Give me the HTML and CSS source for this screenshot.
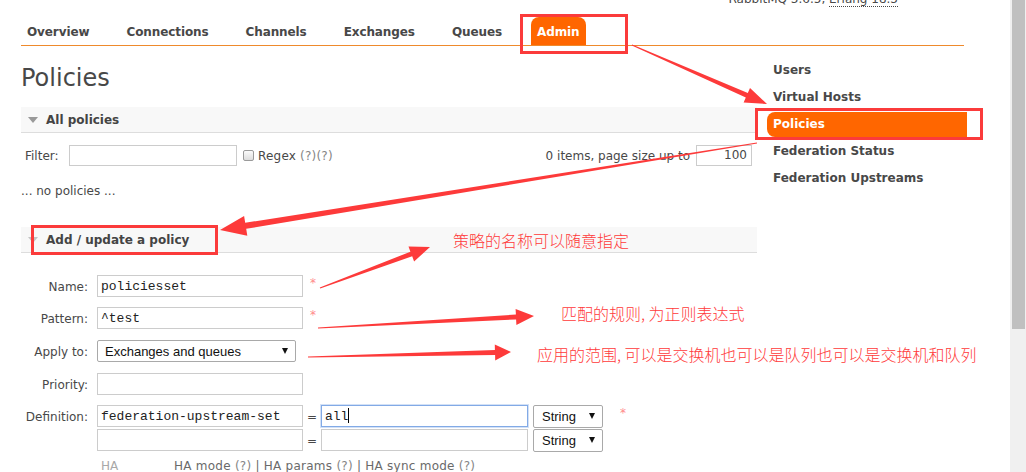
FILE: index.html
```html
<!DOCTYPE html>
<html lang="en">
<head>
<meta charset="utf-8">
<title>RabbitMQ Management - Policies</title>
<link rel="stylesheet" href="styles.css">
</head>
<body>
<div class="viewport">
  <div class="page">
    <div class="masthead"><span class="version">RabbitMQ 3.6.5, <abbr class="erlang">Erlang 18.3</abbr></span></div>
    <ul class="menu">
      <li><a>Overview</a></li>
      <li><a>Connections</a></li>
      <li><a>Channels</a></li>
      <li><a>Exchanges</a></li>
      <li><a>Queues</a></li>
      <li class="active"><a>Admin</a></li>
    </ul>
    <div class="content">
      <div class="main">
        <h1>Policies</h1>
        <div class="section">
          <h2 class="section-head"><span class="tri"></span>All policies</h2>
          <div class="filter-row">
            <label class="filter-label">Filter:</label>
            <div class="filter-input"></div>
            <span class="checkbox"></span>
            <span class="regex">Regex <span class="help">(?)(?)</span></span>
            <span class="items">0 items, page size up to</span>
            <div class="page-size">100</div>
          </div>
          <p class="empty">... no policies ...</p>
        </div>
        <div class="section add">
          <h2 class="section-head"><span class="tri light"></span>Add / update a policy</h2>
          <div class="form">
            <div class="frow mb10">
              <label class="flabel">Name:</label>
              <div class="input">policiesset</div>
              <span class="req">*</span>
            </div>
            <div class="frow mb11">
              <label class="flabel">Pattern:</label>
              <div class="input">^test</div>
              <span class="req">*</span>
            </div>
            <div class="frow mb11">
              <label class="flabel">Apply to:</label>
              <div class="select apply"><span>Exchanges and queues</span><span class="caret"></span></div>
            </div>
            <div class="frow mb10">
              <label class="flabel">Priority:</label>
              <div class="input"></div>
            </div>
            <div class="frow">
              <label class="flabel">Definition:</label>
              <div class="input">federation-upstream-set</div>
              <span class="eq">=</span>
              <div class="input value focus">all<span class="cursor"></span></div>
              <div class="select type"><span>String</span><span class="caret"></span></div>
              <span class="req wide">*</span>
            </div>
            <div class="frow second">
              <span class="flabel"></span>
              <div class="input"></div>
              <span class="eq">=</span>
              <div class="input value"></div>
              <div class="select type"><span>String</span><span class="caret"></span></div>
            </div>
            <div class="ha-row">
              <span class="ha-label">HA</span>
              <span class="ha-links">HA mode <span class="help">(?)</span> | HA params <span class="help">(?)</span> | HA sync mode <span class="help">(?)</span></span>
            </div>
          </div>
        </div>
      </div>
      <ul class="side">
        <li><a>Users</a></li>
        <li><a>Virtual Hosts</a></li>
        <li class="active"><a>Policies</a></li>
        <li><a>Federation Status</a></li>
        <li><a>Federation Upstreams</a></li>
      </ul>
    </div>
  </div>
  <div class="scrollbar"><div class="thumb"></div></div>

  <div class="annotations">
    <div class="box box-admin"></div>
    <div class="box box-policies"></div>
    <div class="box box-add"></div>
    <svg class="arrows" width="1026" height="472" viewBox="0 0 1026 472">
      <polygon points="631.8,45.5 745.8,97.5 743.6,102.5 767,104 750.0,87.9 747.8,92.9 632.2,44.5"/>
      <polygon points="756.9,142.5 245.2,222.8 244.1,216.0 220,230 247.3,235.7 246.2,228.8 757.1,143.5"/>
      <polygon points="320.2,288.5 412.2,256.3 414.1,261.5 430,247 408.5,246.5 410.4,251.7 319.8,287.5"/>
      <polygon points="318,328.5 516.1,319.5 516.4,325.0 534,316 515.6,309.0 515.9,314.5 318,327.5"/>
      <polygon points="308,357.5 495.1,354.9 495.2,360.4 511,352 494.8,344.4 494.9,349.9 308,356.5"/>
    </svg>
    <div class="note note-name">策略的名称可以随意指定</div>
    <div class="note note-pattern">匹配的规则, 为正则表达式</div>
    <div class="note note-apply">应用的范围, 可以是交换机也可以是队列也可以是交换机和队列</div>
  </div>
</div>
</body>
</html>
```

FILE: styles.css
```css
html, body {
  margin: 0;
  padding: 0;
  background: #fff;
}
body {
  font: 12px/14px "DejaVu Sans", Verdana, sans-serif;
  color: #484848;
  overflow: hidden;
}
.viewport {
  position: relative;
  display: flex;
  width: 1026px;
  height: 472px;
  overflow: hidden;
}
.page {
  flex: 1;
  padding-left: 21px;
}
.scrollbar {
  width: 16px;
  background: #f0f0f0;
}
.thumb {
  margin-left: 2px;
  width: 13px;
  height: 329px;
  background: #c0c0c0;
}

/* masthead */
.masthead {
  width: 877px;
  height: 14px;
  margin-top: -8px;
  text-align: right;
}
.erlang {
  text-decoration: none;
  border-bottom: 1px dotted #484848;
}

/* top menu */
.menu {
  display: flex;
  gap: 25px;
  list-style: none;
  margin: 11px 0 0;
  padding: 0;
  width: 943px;
  border-bottom: 1px solid #ef8a2c;
}
.menu li a {
  display: block;
  padding: 8px 6px 6px;
  font-weight: bold;
  letter-spacing: -0.1px;
  color: #484848;
}
.menu li.active {
  margin-left: -2px;
}
.menu li.active a {
  background: #f60;
  color: #fff;
  border-radius: 8px 8px 0 0;
}

/* content */
.content {
  display: flex;
}
.main {
  width: 736px;
}
h1 {
  margin: 18px 0 14px;
  font-size: 24px;
  line-height: 29px;
  font-weight: normal;
  color: #484848;
}
.section-head {
  display: flex;
  align-items: center;
  margin: 0;
  height: 25px;
  padding-left: 7px;
  background: #f8f8f8;
  border-bottom: 1px solid #dddddd;
  font-size: 12px;
  font-weight: bold;
  color: #444;
}
.tri {
  width: 0;
  height: 0;
  border-left: 5px solid transparent;
  border-right: 5px solid transparent;
  border-top: 6px solid #999;
  margin-right: 8px;
}
.tri.light {
  border-top-color: #c4c4c4;
}

/* filter */
.filter-row {
  display: flex;
  align-items: center;
  height: 21px;
  margin-top: 12px;
  padding: 0 5px 0 4px;
}
.filter-label {
  width: 44px;
}
.filter-input {
  width: 168px;
  height: 21px;
  box-sizing: border-box;
  border: 1px solid #cccccc;
}
.checkbox {
  width: 11px;
  height: 11px;
  box-sizing: border-box;
  margin: 0 4px 0 6px;
  border: 1px solid #9a9a9a;
  border-radius: 2px;
  background: linear-gradient(#fbfbfb, #dcdcdc);
}
.regex {
  letter-spacing: 0.2px;
}
.help {
  color: #858585;
}
.items {
  margin-left: auto;
  margin-right: 6px;
}
.page-size {
  width: 56px;
  height: 21px;
  box-sizing: border-box;
  border: 1px solid #cccccc;
  text-align: right;
  padding-right: 4px;
  line-height: 19px;
}
.empty {
  margin: 18px 0 29px;
}

/* form */
.form {
  padding-top: 22px;
}
.frow {
  display: flex;
  align-items: center;
  height: 22px;
}
.mb10 { margin-bottom: 10px; }
.mb11 { margin-bottom: 11px; }
.frow.second {
  margin-top: 2px;
}
.flabel {
  width: 67px;
  margin-right: 9px;
  padding-top: 1px;
  text-align: right;
}
.input {
  width: 206px;
  height: 22px;
  box-sizing: border-box;
  border: 1px solid #cccccc;
  padding: 0 3px;
  font: 13px/21px "Liberation Mono", "Courier New", monospace;
  color: #222;
  background: #fff;
}
.input.value {
  width: 207px;
}
.input.focus {
  border-color: #82aae6;
  box-shadow: 0 0 0 1px rgba(130, 170, 230, 0.35);
}
.cursor {
  display: inline-block;
  width: 1px;
  height: 15px;
  background: #000;
  vertical-align: -3px;
}
.req {
  align-self: flex-start;
  margin: 2px 0 0 7px;
  color: #ff8a8a;
  font-size: 12px;
  line-height: 12px;
}
.req.wide {
  margin-left: 17px;
}
.eq {
  width: 18px;
  text-align: center;
  padding-top: 1px;
}
.select {
  display: flex;
  align-items: center;
  justify-content: space-between;
  box-sizing: border-box;
  height: 22px;
  border: 1px solid #a9a9a9;
  border-radius: 2px;
  background: #fff;
  font: 13px "Liberation Sans", Arial, sans-serif;
  color: #111;
}
.select.apply {
  width: 199px;
  padding: 0 7px;
}
.select.type {
  width: 70px;
  height: 23px;
  margin-left: 5px;
  padding: 0 7px 0 8px;
}
.caret {
  width: 0;
  height: 0;
  border-left: 3.5px solid transparent;
  border-right: 3.5px solid transparent;
  border-top: 6px solid #111;
}
.ha-row {
  display: flex;
  margin-top: 8px;
  padding-left: 80px;
}
.ha-label {
  width: 73px;
  color: #a8a8a8;
}
.ha-links {
  color: #6a6a6a;
  letter-spacing: 0.25px;
}

/* side menu */
.side {
  list-style: none;
  margin: 12px 0 0 10px;
  padding: 0;
  width: 200px;
}
.side li {
  margin-bottom: 2px;
}
.side li a {
  display: block;
  height: 25px;
  line-height: 25px;
  padding-left: 6px;
  font-weight: bold;
  color: #484848;
}
.side li.active a {
  background: #f60;
  color: #fff;
  border-radius: 8px 0 0 8px;
}

/* annotations overlay */
.annotations {
  position: absolute;
  left: 0;
  top: 0;
  width: 1026px;
  height: 472px;
  pointer-events: none;
}
.box {
  position: absolute;
  box-sizing: border-box;
  border: 3px solid #fb3b3b;
}
.box-admin {
  left: 520px;
  top: 14px;
  width: 108px;
  height: 40px;
}
.box-policies {
  left: 755px;
  top: 108px;
  width: 228px;
  height: 32px;
}
.box-add {
  left: 31px;
  top: 225px;
  width: 187px;
  height: 30px;
}
.arrows {
  position: absolute;
  left: 0;
  top: 0;
}
.arrows polygon {
  fill: #fd3a3a;
}
.note {
  position: absolute;
  font: 300 16px/18px "Noto Sans CJK SC", sans-serif;
  color: #ff3a3a;
  white-space: nowrap;
}
.note-name {
  left: 453px;
  top: 231px;
}
.note-pattern {
  left: 561px;
  top: 304px;
}
.note-apply {
  left: 537px;
  top: 345px;
}
```
